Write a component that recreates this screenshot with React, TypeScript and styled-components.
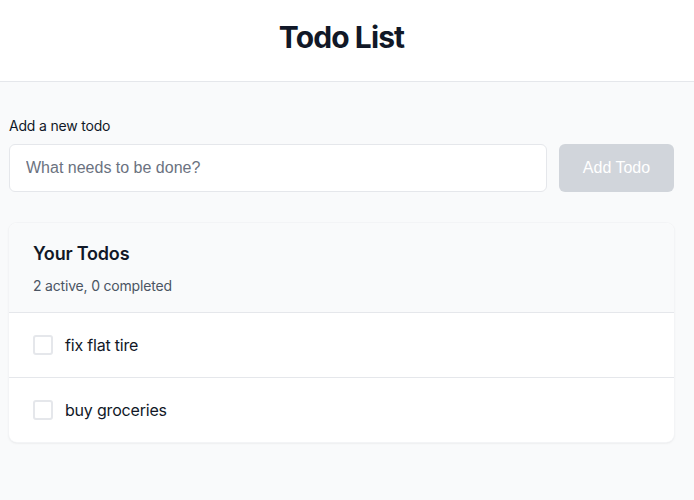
import { useState } from 'react';
import styled, { createGlobalStyle } from 'styled-components';

const GlobalStyle = createGlobalStyle`
  html, body {
    margin: 0;
    padding: 0;
    background: #f9fafb;
    font-family: 'Inter', 'Liberation Sans', sans-serif;
    letter-spacing: -0.012em;
    color: #111827;
  }
  * {
    box-sizing: border-box;
  }
`;

const Page = styled.div`
  min-height: 500px;
  background: #f9fafb;
`;

const Header = styled.header`
  background: #ffffff;
  border-bottom: 1px solid #e5e7eb;
  padding: 19px 20px 26px 9px;
  text-align: center;
`;

const Title = styled.h1`
  margin: 0;
  font-size: 30px;
  line-height: 36px;
  font-weight: 700;
  letter-spacing: -0.03em;
  color: #111827;
`;

const Main = styled.main`
  padding: 34px 20px 0 9px;
`;

const Label = styled.label`
  display: block;
  font-size: 14px;
  line-height: 20px;
  font-weight: 400;
  color: #111827;
  margin-bottom: 8px;
`;

const FormRow = styled.form`
  display: flex;
  gap: 12px;
  margin: 0 0 31px;
`;

/* form controls keep the browser's own sans face, as in the original */
const Input = styled.input`
  flex: 1;
  height: 48px;
  padding: 0 16px;
  border: 1px solid #e5e7eb;
  border-radius: 6px;
  background: #ffffff;
  font-family: 'Liberation Sans', Arial, sans-serif;
  font-size: 16px;
  color: #111827;
  outline: none;

  &::placeholder {
    color: #6b7280;
  }
`;

const AddButton = styled.button`
  width: 115px;
  height: 48px;
  border: none;
  border-radius: 6px;
  background: #d1d5db;
  color: #ffffff;
  font-family: 'Liberation Sans', Arial, sans-serif;
  font-size: 16px;
  cursor: not-allowed;
`;

const Card = styled.section`
  background: #ffffff;
  border-radius: 8px;
  box-shadow: 0 0 0 1px #f3f4f6, 0 1px 3px rgba(0, 0, 0, 0.08), 0 1px 2px rgba(0, 0, 0, 0.04);
  overflow: hidden;
`;

const CardHeader = styled.div`
  background: #f9fafb;
  padding: 17px 24px 16px;
  border-bottom: 1px solid #e5e7eb;
`;

const CardTitle = styled.h2`
  margin: 0;
  font-size: 18px;
  line-height: 28px;
  font-weight: 600;
  color: #111827;
`;

const Summary = styled.p`
  margin: 8px 0 0;
  font-size: 14px;
  line-height: 20px;
  color: #4b5563;
`;

const List = styled.ul`
  list-style: none;
  margin: 0;
  padding: 0;
`;

const Item = styled.li`
  display: flex;
  align-items: center;
  gap: 12px;
  padding: 20px 24px;
  border-top: 1px solid #e5e7eb;

  &:first-child {
    border-top: none;
  }
`;

const Check = styled.span<{ $checked: boolean }>`
  width: 20px;
  height: 20px;
  flex: 0 0 auto;
  border: 2px solid #e5e7eb;
  border-radius: 3px;
  background: ${(p) => (p.$checked ? '#3b82f6' : '#ffffff')};
  cursor: pointer;
`;

const ItemText = styled.span<{ $done: boolean }>`
  font-size: 16px;
  line-height: 24px;
  color: ${(p) => (p.$done ? '#9ca3af' : '#111827')};
  text-decoration: ${(p) => (p.$done ? 'line-through' : 'none')};
`;

interface Todo {
  id: number;
  text: string;
  done: boolean;
}

export default function App() {
  const [todos, setTodos] = useState<Todo[]>([
    { id: 1, text: 'fix flat tire', done: false },
    { id: 2, text: 'buy groceries', done: false },
  ]);
  const [draft, setDraft] = useState('');

  const active = todos.filter((t) => !t.done).length;
  const completed = todos.length - active;

  const toggle = (id: number) =>
    setTodos((list) => list.map((t) => (t.id === id ? { ...t, done: !t.done } : t)));

  const add = (e: React.FormEvent) => {
    e.preventDefault();
    if (!draft.trim()) return;
    setTodos((list) => [...list, { id: Date.now(), text: draft.trim(), done: false }]);
    setDraft('');
  };

  return (
    <Page>
      <GlobalStyle />
      <Header>
        <Title>Todo List</Title>
      </Header>
      <Main>
        <Label htmlFor="new-todo">Add a new todo</Label>
        <FormRow onSubmit={add}>
          <Input
            id="new-todo"
            placeholder="What needs to be done?"
            value={draft}
            onChange={(e) => setDraft(e.target.value)}
          />
          <AddButton type="submit" disabled={!draft.trim()}>
            Add Todo
          </AddButton>
        </FormRow>
        <Card>
          <CardHeader>
            <CardTitle>Your Todos</CardTitle>
            <Summary>
              {active} active, {completed} completed
            </Summary>
          </CardHeader>
          <List>
            {todos.map((todo) => (
              <Item key={todo.id}>
                <Check $checked={todo.done} onClick={() => toggle(todo.id)} />
                <ItemText $done={todo.done}>{todo.text}</ItemText>
              </Item>
            ))}
          </List>
        </Card>
      </Main>
    </Page>
  );
}
